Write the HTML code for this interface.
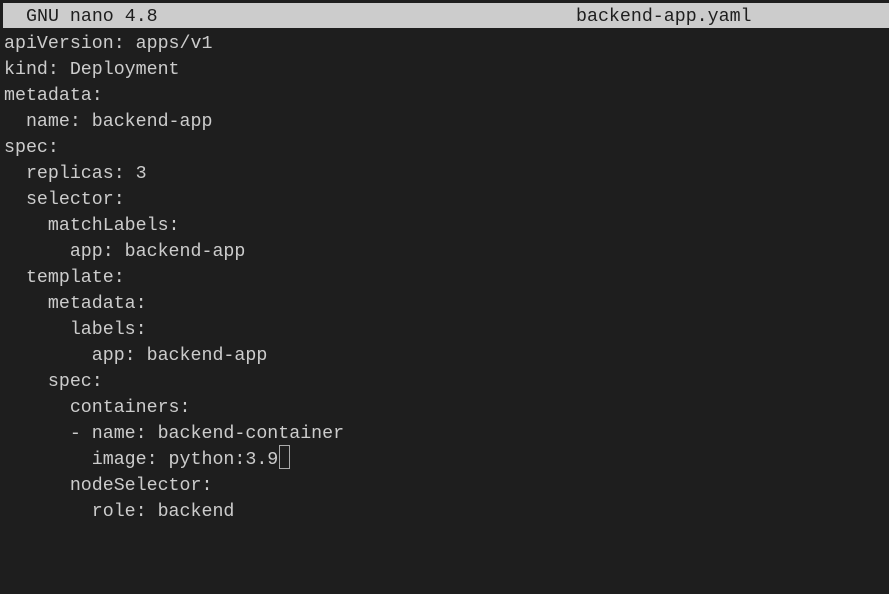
<!DOCTYPE html>
<html><head><style>
html,body{margin:0;padding:0;background:#1e1e1e;width:889px;height:594px;overflow:hidden}
.t{position:absolute;left:4px;top:5px;font-family:"Liberation Mono",monospace;font-size:18.3px;line-height:26px;color:#cccccc;white-space:pre}
.h{position:absolute;left:3px;top:3px;width:886px;height:25px;background:#cccccc}
.h span{position:absolute;top:2px;line-height:25px;font-family:"Liberation Mono",monospace;font-size:18.3px;color:#1e1e1e;white-space:pre}
.cur{position:absolute;left:279px;top:445px;width:9px;height:22px;border:1.5px solid #aaa}
</style></head><body>
<div class="h"><span style="left:23px">GNU nano 4.8</span><span style="left:573px">backend-app.yaml</span></div>
<div class="t">
apiVersion: apps/v1
kind: Deployment
metadata:
  name: backend-app
spec:
  replicas: 3
  selector:
    matchLabels:
      app: backend-app
  template:
    metadata:
      labels:
        app: backend-app
    spec:
      containers:
      - name: backend-container
        image: python:3.9
      nodeSelector:
        role: backend</div>
<div class="cur"></div>
</body></html>
